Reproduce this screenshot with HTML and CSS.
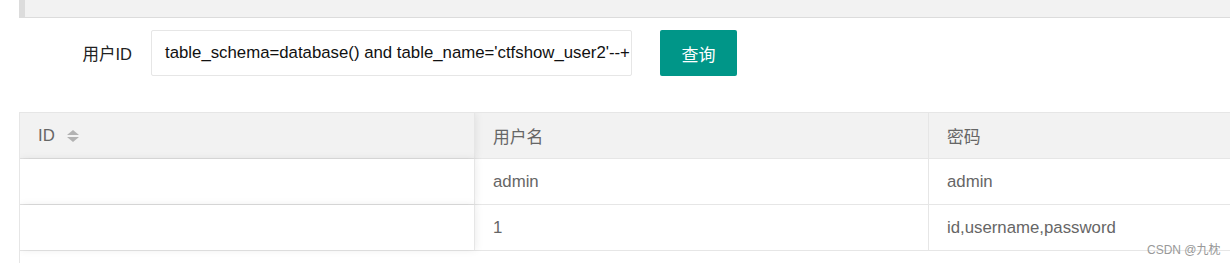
FILE: index.html
```html
<!DOCTYPE html>
<html lang="zh-CN">
<head>
<meta charset="utf-8">
<title>ctfshow</title>
<link rel="stylesheet" href="styles.css">
</head>
<body>
<div class="quote"></div>
<form class="form-row">
  <label class="label">用户ID</label>
  <div class="input">table_schema=database() and table_name='ctfshow_user2'--+</div>
  <button type="button" class="btn">查询</button>
</form>
<div class="table-view">
  <div class="table">
    <div class="row head">
      <div class="cell c1">ID <span class="sort"><i class="up"></i><i class="down"></i></span></div>
      <div class="cell c2">用户名</div>
      <div class="cell c3">密码</div>
    </div>
    <div class="row">
      <div class="cell c1"></div>
      <div class="cell c2">admin</div>
      <div class="cell c3">admin</div>
    </div>
    <div class="row">
      <div class="cell c1"></div>
      <div class="cell c2">1</div>
      <div class="cell c3">id,username,password</div>
    </div>
  </div>
</div>
<div class="watermark">CSDN @九枕</div>
</body>
</html>
```
FILE: styles.css
```css
html, body {
  margin: 0;
  padding: 0;
  background: #fff;
  overflow: hidden;
}
body {
  font-family: Arial, "Liberation Sans", "Noto Sans CJK SC", sans-serif;
  width: 1230px;
  height: 263px;
  position: relative;
}
.quote {
  margin-left: 19px;
  height: 17px;
  background: #f2f2f2;
  border-left: 6px solid #dcdcdc;
  border-bottom: 1px solid #dcdcdc;
}
.form-row {
  display: flex;
  align-items: center;
  margin: 12px 0 0 0;
  height: 46px;
}
.label {
  width: 132px;
  text-align: right;
  font-size: 16.5px;
  color: #222;
  margin-right: 19px;
}
.input {
  box-sizing: border-box;
  width: 481px;
  height: 46px;
  border: 1px solid #e6e6e6;
  border-radius: 2px;
  padding-left: 13px;
  display: flex;
  align-items: center;
  font-size: 16.8px;
  color: #111;
  white-space: nowrap;
  overflow: hidden;
}
.btn {
  margin-left: 28px;
  width: 77px;
  height: 46px;
  border: none;
  border-radius: 2px;
  background: #009688;
  color: #fff;
  font-family: "Noto Sans CJK SC", sans-serif;
  font-size: 17px;
  padding: 0;
}
.table-view {
  margin: 36px 0 0 19px;
  border-left: 1px solid #e6e6e6;
  border-top: 1px solid #e6e6e6;
  height: 150px;
  overflow: hidden;
}
.row {
  display: flex;
  height: 45px;
  border-bottom: 1px solid #e6e6e6;
}
.row.head {
  background: #f2f2f2;
}
.cell {
  box-sizing: border-box;
  display: flex;
  align-items: center;
  padding-left: 18px;
  font-size: 16.8px;
  color: #666;
}
.c1 {
  width: 455px;
  border-right: 1px solid #e6e6e6;
  position: relative;
  z-index: 1;
  box-shadow: 1px 0 8px rgba(0,0,0,0.08);
}
.head .c1 { background: #f2f2f2; }
.row:not(.head) .c1 { background: #fff; }
.c2 {
  width: 454px;
  border-right: 1px solid #e6e6e6;
}
.c3 {
  flex: 1;
}
.sort {
  display: inline-flex;
  flex-direction: column;
  gap: 2px;
  margin-left: 12px;
}
.sort i {
  width: 0;
  height: 0;
  border-left: 6px solid transparent;
  border-right: 6px solid transparent;
}
.sort .up { border-bottom: 5px solid #b2b2b2; }
.sort .down { border-top: 5px solid #b2b2b2; }
.watermark {
  position: absolute;
  left: 1147px;
  top: 240px;
  font-size: 12px;
  color: #999;
  font-family: Arial, "Liberation Sans", "Noto Sans CJK SC", sans-serif;
}
```
